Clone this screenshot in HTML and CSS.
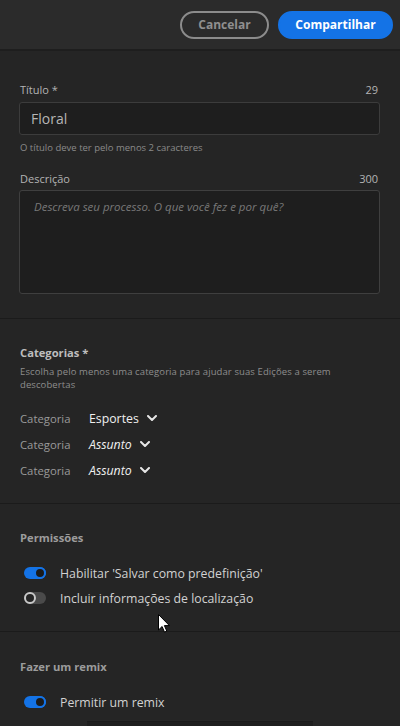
FILE: index.html
```html
<!DOCTYPE html>
<html lang="pt">
<head>
<meta charset="utf-8">
<link rel="stylesheet" href="styles.css">
</head>
<body>
<div class="app">
  <header class="topbar">
    <button class="btn btn-outline">Cancelar</button>
    <button class="btn btn-primary">Compartilhar</button>
  </header>
  <main class="content">
    <section class="section section-fields">
      <div class="field-head"><span>Título *</span><span>29</span></div>
      <div class="input">Floral</div>
      <div class="hint">O título deve ter pelo menos 2 caracteres</div>
      <div class="field-head field-head-desc"><span>Descrição</span><span>300</span></div>
      <div class="textarea">Descreva seu processo. O que você fez e por quê?</div>
    </section>
    <section class="section section-cat">
      <h2 class="section-title title-light">Categorias *</h2>
      <p class="section-desc">Escolha pelo menos uma categoria para ajudar suas Edições a serem descobertas</p>
      <div class="cat-list">
        <div class="cat-row"><span class="cat-label">Categoria</span><span class="cat-value">Esportes</span><svg class="chev" viewBox="0 0 10 6"><path d="M1 1l4 4 4-4" /></svg></div>
        <div class="cat-row"><span class="cat-label">Categoria</span><span class="cat-value italic">Assunto</span><svg class="chev" viewBox="0 0 10 6"><path d="M1 1l4 4 4-4" /></svg></div>
        <div class="cat-row"><span class="cat-label">Categoria</span><span class="cat-value italic">Assunto</span><svg class="chev" viewBox="0 0 10 6"><path d="M1 1l4 4 4-4" /></svg></div>
      </div>
    </section>
    <section class="section section-perm">
      <h2 class="section-title">Permissões</h2>
      <div class="toggles">
        <div class="toggle-row"><span class="toggle on"></span><span>Habilitar 'Salvar como predefinição'</span></div>
        <div class="toggle-row"><span class="toggle"></span><span>Incluir informações de localização</span></div>
      </div>
    </section>
    <section class="section section-remix">
      <h2 class="section-title">Fazer um remix</h2>
      <div class="toggles">
        <div class="toggle-row"><span class="toggle on"></span><span>Permitir um remix</span></div>
      </div>
      <div class="remix-box"></div>
    </section>
  </main>
  <svg class="cursor" viewBox="0 0 12 19" width="12" height="19"><path d="M0.5 0.5v15.5l3.6-3.5 2.4 5.6 2.3-1-2.4-5.5h5z" fill="#fff" stroke="#000" stroke-width="1"/></svg>
</div>
</body>
</html>
```
FILE: styles.css
```css
* { box-sizing: border-box; }
html, body { margin: 0; padding: 0; }
body {
  width: 400px;
  height: 726px;
  overflow: hidden;
  background: #252525;
  font-family: "Open Sans", "Noto Sans", sans-serif;
  color: #c8c8c8;
}
.app { position: relative; width: 400px; height: 726px; overflow: hidden; }
.topbar {
  height: 51px;
  background: #2b2b2b;
  border-bottom: 2px solid #1e1e1e;
  display: flex;
  justify-content: flex-end;
  align-items: flex-start;
  gap: 9px;
  padding: 11px 7px 0 0;
}
.btn {
  height: 28px;
  border-radius: 14px;
  font-family: inherit;
  font-size: 12px;
  font-weight: 700;
  padding: 0 10px;
  line-height: 24px;
}
.btn-outline {
  width: 89px;
  background: transparent;
  border: 2px solid #8c8c8c;
  color: #8f8f8f;
}
.btn-primary {
  width: 115px;
  background: #1473e6;
  border: 2px solid #1473e6;
  color: #fff;
}
.section { border-bottom: 1px solid #1b1b1b; padding: 0 20px; }
.section-fields { padding-top: 32px; padding-bottom: 24px; }
.field-head {
  display: flex;
  justify-content: space-between;
  font-size: 11px;
  color: #b4b4b4;
  line-height: 14px;
  padding-right: 2px;
}
.field-head-desc { margin-top: 17px; }
.input {
  margin-top: 5px;
  height: 33px;
  width: 361px;
  margin-left: -1px;
  background: #1e1e1e;
  border: 1px solid #3c3c3c;
  border-radius: 3px;
  padding: 0 11px;
  font-size: 14px;
  line-height: 31px;
  color: #b6b6b6;
}
.hint { margin-top: 6px; font-size: 9.5px; color: #8a8a8a; line-height: 14px; }
.textarea {
  margin-top: 4px;
  height: 104px;
  width: 361px;
  margin-left: -1px;
  background: #1e1e1e;
  border: 1px solid #3f3f3f;
  border-radius: 3px;
  padding: 6px 14px;
  font-size: 11.5px;
  font-style: italic;
  line-height: 20px;
  color: #787878;
}
.section-title {
  margin: 0;
  font-size: 11.2px;
  font-weight: 700;
  color: #9c9c9c;
  line-height: 16px;
}
.title-light { color: #bdbdbd; }
.section-cat { padding-top: 26px; padding-bottom: 24px; }
.section-desc {
  margin: 4px 0 0;
  font-size: 9.5px;
  color: #8d8d8d;
  line-height: 13px;
  letter-spacing: 0.1px;
}
.cat-list { margin-top: 18px; display: flex; flex-direction: column; gap: 8px; }
.cat-row { display: flex; align-items: center; height: 18px; }
.cat-label { width: 69px; font-size: 11.3px; color: #9a9a9a; }
.cat-value { font-size: 12.3px; color: #f0f0f0; }
.italic { font-style: italic; }
.chev { width: 10px; height: 6px; margin-left: 8px; fill: none; stroke: #e6e6e6; stroke-width: 2; stroke-linecap: round; stroke-linejoin: round; }
.section-perm { padding-top: 26px; padding-bottom: 25px; }
.toggles { margin-top: 19px; display: flex; flex-direction: column; gap: 9px; }
.toggle-row { display: flex; align-items: center; gap: 14px; font-size: 12.3px; color: #d2d2d2; height: 16px; padding-left: 4px; }
.toggle {
  position: relative;
  width: 22px;
  height: 12px;
  border-radius: 6px;
  background: #4a4a4a;
  flex: none;
}
.toggle::after {
  content: "";
  position: absolute;
  left: 0;
  top: 0;
  width: 12px;
  height: 12px;
  border-radius: 50%;
  box-sizing: border-box;
  border: 2px solid #c8c8c8;
  background: #252525;
}
.toggle.on { background: #1473e6; }
.toggle.on::after { left: 10px; border-color: #1473e6; background: #1b1b1b; }
.section-remix { border-bottom: none; padding-top: 27px; }
.remix-box {
  margin: 11px 0 0 67px;
  width: 226px;
  height: 20px;
  background: #1e1e1e;
  border-top: 1px solid #1a1a1a;
}
.cursor { position: absolute; left: 158px; top: 614px; }
```
